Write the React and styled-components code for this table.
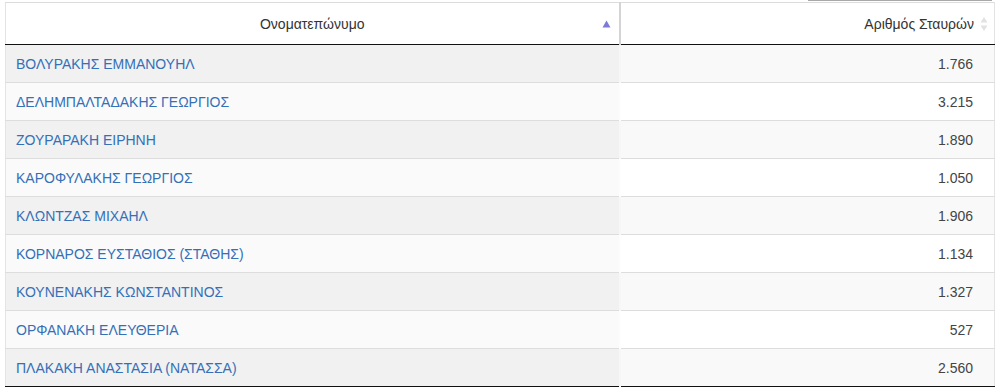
import React from "react"
import styled, { createGlobalStyle } from "styled-components"

const GlobalStyle = createGlobalStyle`
  body {
    margin: 0;
    background: #fff;
    font-family: "Liberation Sans", Arial, sans-serif;
  }
`

const Wrap = styled.div`
  padding: 0 8px 0 5px;
`

const ScrollHint = styled.div`
  display: flex;
  justify-content: flex-end;
  height: 2px;
  padding-right: 3px;
  &::after {
    content: "";
    width: 184px;
    height: 1px;
    background: #a8a8a8;
  }
`

const Table = styled.table`
  width: 990px;
  border-collapse: collapse;
  table-layout: fixed;
  border-top: 1px solid #dcdcdc;
  border-left: 1px solid #e4e4e4;
  border-right: 1px solid #e4e4e4;
  border-bottom: 1px solid #111;
  font-size: 14px;
  color: #333;
`

const Th = styled.th`
  position: relative;
  height: 42px;
  box-sizing: border-box;
  padding: 0 ${(p) => (p.$right ? "20px" : "10px")} 0 10px;
  font-weight: normal;
  text-align: ${(p) => (p.$right ? "right" : "center")};
  border-bottom: 1px solid #111;
  border-right: ${(p) => (p.$right ? "none" : "2px solid #d4d4d4")};
  background: #fff;
`

const SortIcon = styled.svg`
  position: absolute;
  right: ${(p) => p.$r}px;
  top: 50%;
  transform: translateY(-50%);
`

const Row = styled.tr`
  height: 38px;
  border-top: 1px solid #dddddd;
  background: ${(p) => (p.$odd ? "#f9f9f9" : "#fff")};
`

const NameCell = styled.td`
  box-sizing: border-box;
  padding: 0 10px;
  background: ${(p) => (p.$odd ? "#f1f1f1" : "#fafafa")};
  border-right: 2px solid ${(p) => (p.$odd ? "#f7f7f7" : "#fdfdfd")};
`

const NumCell = styled.td`
  padding: 0 21px 0 10px;
  text-align: right;
  color: #444;
`

const NameLink = styled.a`
  color: #3470b8;
  text-decoration: none;
`

const rows = [
  ["ΒΟΛΥΡΑΚΗΣ ΕΜΜΑΝΟΥΗΛ", "1.766"],
  ["ΔΕΛΗΜΠΑΛΤΑΔΑΚΗΣ ΓΕΩΡΓΙΟΣ", "3.215"],
  ["ΖΟΥΡΑΡΑΚΗ ΕΙΡΗΝΗ", "1.890"],
  ["ΚΑΡΟΦΥΛΑΚΗΣ ΓΕΩΡΓΙΟΣ", "1.050"],
  ["ΚΛΩΝΤΖΑΣ ΜΙΧΑΗΛ", "1.906"],
  ["ΚΟΡΝΑΡΟΣ ΕΥΣΤΑΘΙΟΣ (ΣΤΑΘΗΣ)", "1.134"],
  ["ΚΟΥΝΕΝΑΚΗΣ ΚΩΝΣΤΑΝΤΙΝΟΣ", "1.327"],
  ["ΟΡΦΑΝΑΚΗ ΕΛΕΥΘΕΡΙΑ", "527"],
  ["ΠΛΑΚΑΚΗ ΑΝΑΣΤΑΣΙΑ (ΝΑΤΑΣΣΑ)", "2.560"],
]

const App = () => {
  return (
    <Wrap>
      <GlobalStyle />
      <ScrollHint />
      <Table>
        <colgroup>
          <col style={{ width: 614 }} />
          <col />
        </colgroup>
        <thead>
          <tr>
            <Th>
              Ονοματεπώνυμο
              <SortIcon $r={8} width="9" height="8" viewBox="0 0 9 8">
                <path d="M4.5 0.5 L8.5 7.5 L0.5 7.5 Z" fill="#7c7cd8" />
              </SortIcon>
            </Th>
            <Th $right>
              Αριθμός Σταυρών
              <SortIcon $r={6} width="8" height="16" viewBox="0 0 8 16">
                <path d="M4 1 L7.5 6.5 L0.5 6.5 Z" fill="#e2e2e2" />
                <path d="M4 15 L7.5 9.5 L0.5 9.5 Z" fill="#e2e2e2" />
              </SortIcon>
            </Th>
          </tr>
        </thead>
        <tbody>
          {rows.map(([name, votes], i) => (
            <Row key={name} $odd={i % 2 === 0}>
              <NameCell $odd={i % 2 === 0}>
                <NameLink href="#">{name}</NameLink>
              </NameCell>
              <NumCell>{votes}</NumCell>
            </Row>
          ))}
        </tbody>
      </Table>
    </Wrap>
  )
}

export default App
